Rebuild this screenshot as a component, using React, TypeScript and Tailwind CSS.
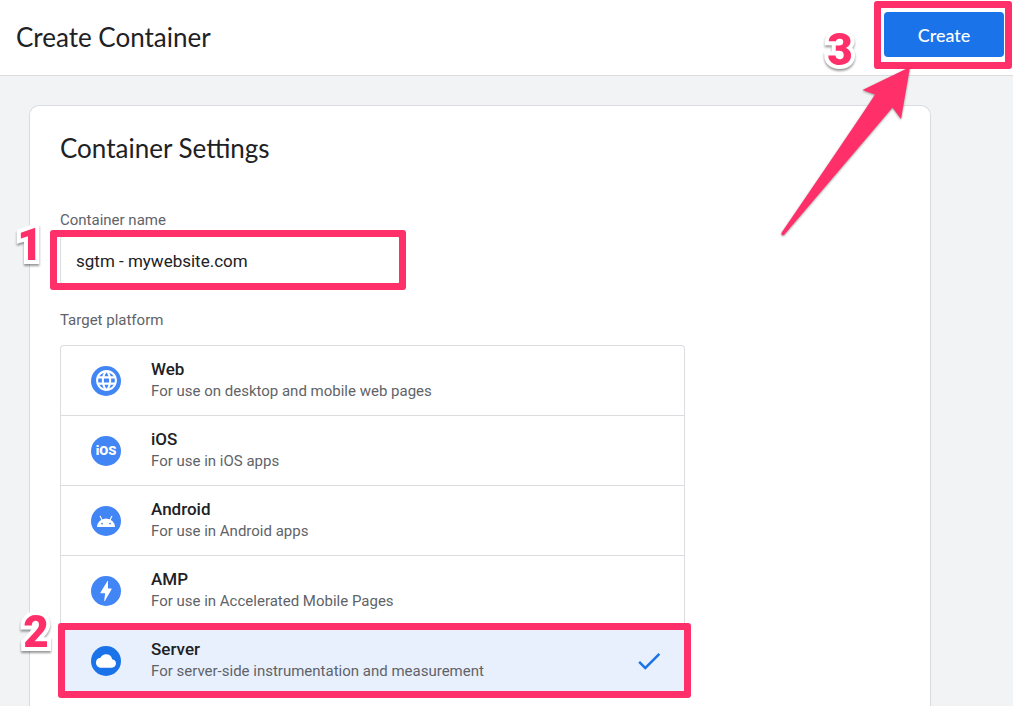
import React, { useState } from 'react';
import clsx from 'clsx';
import { MdCheck, MdCloud, MdLanguage } from 'react-icons/md';

interface Platform {
    id: string;
    name: string;
    description: string;
    icon: React.ReactNode;
}

const AndroidIcon: React.FC = () => (
    <svg viewBox="0 0 20 12" className="w-5 h-3" aria-hidden="true">
        <path d="M1 12a9 8.6 0 0 1 18 0z" fill="white" />
        <path d="M6 5 4.2 1.2M14 5l1.8-3.8" stroke="white" strokeWidth="1.1" strokeLinecap="round" />
        <circle cx="6" cy="8.6" r="0.9" fill="#4285f4" />
        <circle cx="14" cy="8.6" r="0.9" fill="#4285f4" />
    </svg>
);

const BoltIcon: React.FC = () => (
    <svg viewBox="0 0 12 22" className="w-3 h-[22px]" aria-hidden="true">
        <path d="M7.6.8 8 1v7.6h3.2c.4 0 .6.4.4.7L4.7 21.2l-.5-.2.9-7.8H1c-.5 0-.7-.4-.5-.8z" fill="white" />
    </svg>
);

const PLATFORMS: Platform[] = [
    {
        id: 'web',
        name: 'Web',
        description: 'For use on desktop and mobile web pages',
        icon: <MdLanguage size={25} />,
    },
    {
        id: 'ios',
        name: 'iOS',
        description: 'For use in iOS apps',
        icon: <span className="text-[13px] leading-[30px] font-black">iOS</span>,
    },
    {
        id: 'android',
        name: 'Android',
        description: 'For use in Android apps',
        icon: <AndroidIcon />,
    },
    {
        id: 'amp',
        name: 'AMP',
        description: 'For use in Accelerated Mobile Pages',
        icon: <BoltIcon />,
    },
    {
        id: 'server',
        name: 'Server',
        description: 'For server-side instrumentation and measurement',
        icon: <MdCloud size={20} />,
    },
];

const Highlight: React.FC<{ className: string }> = ({ className }) => (
    <div className={clsx('absolute border-[7px] border-[#ff3069] rounded-[3px] pointer-events-none', className)} />
);

const Step: React.FC<{ value: number; className: string }> = ({ value, className }) => (
    <span
        className={clsx(
            'absolute w-[26px] text-center font-black text-[44px] leading-[44px] text-[#ff3069] pointer-events-none',
            '[-webkit-text-stroke:8px_white] [paint-order:stroke_fill] [stroke-linejoin:round] drop-shadow-[0_2px_1px_rgba(0,0,0,0.4)]',
            className
        )}
    >
        {value}
    </span>
);

const Arrow: React.FC = () => (
    <svg
        viewBox="0 0 132 172"
        className="absolute right-[92px] top-[54px] z-10 w-[132px] h-[172px] pointer-events-none drop-shadow-[0_1px_1px_rgba(0,0,0,0.4)]"
        aria-hidden="true"
    >
        <path d="M130 1 82.500 24 95 28.500Q90 37 2 166Q0 170 4 169Q80 80 112.500 41.500L121 53z" fill="#ff3069" />
    </svg>
);

const App: React.FC = () => {
    const [name, setName] = useState('sgtm - mywebsite.com');
    const [platform, setPlatform] = useState('server');

    return (
        <div className="min-h-screen flex flex-col bg-[#f1f3f4] font-['Roboto',sans-serif] text-[#202124]">
            <header className="flex items-start justify-between h-[76px] pt-3 pl-4 pr-[9px] bg-white border-b border-[#dadce0]">
                <h1 className="font-['Lato',sans-serif] text-[26px] leading-[50px]">Create Container</h1>
                <div className="relative">
                    <button
                        type="button"
                        className="block w-[120px] h-[45px] rounded bg-[#1a73e8] font-['Lato',sans-serif] text-lg font-medium text-white"
                    >
                        Create
                    </button>
                    <Highlight className="-left-[10px] -right-2 -top-[11px] -bottom-3" />
                    <Step value={3} className="right-[151px] top-4" />
                    <Arrow />
                </div>
            </header>

            <main className="flex-1 flex px-[29px] pt-[29px]">
                <section className="w-full max-w-[902px] px-[30px] pt-6 pb-2 bg-white border border-b-0 border-[#dadce0] rounded-t-[10px]">
                    <h2 className="font-['Lato',sans-serif] text-[26px] leading-9">Container Settings</h2>

                    <label htmlFor="container-name" className="block mt-11 text-[15px] leading-5 text-[#5f6368]">
                        Container name
                    </label>
                    <div className="relative mt-[5px] w-[340px]">
                        <input
                            id="container-name"
                            type="text"
                            value={name}
                            onChange={(e) => setName(e.target.value)}
                            className="block w-full h-[50px] px-[15px] pt-0.5 border border-[#dadce0] rounded text-[17px] outline-none"
                        />
                        <Highlight className="-left-[10px] -right-[6px] -inset-y-[5px]" />
                        <Step value={1} className="right-[357px] -top-3" />
                    </div>

                    <fieldset className="mt-[25px]">
                        <legend className="text-[15px] leading-5 text-[#5f6368]">Target platform</legend>
                        <div className="mt-[15px] w-full max-w-[625px] border border-b-0 border-[#dadce0] rounded">
                            {PLATFORMS.map((item) => {
                                const selected = item.id === platform;
                                return (
                                    <label
                                        key={item.id}
                                        className={clsx(
                                            'relative flex items-center h-[70px] px-[30px] border-b border-[#dadce0] cursor-pointer',
                                            selected && 'bg-[#e8f0fe]'
                                        )}
                                    >
                                        <input
                                            type="radio"
                                            name="platform"
                                            value={item.id}
                                            checked={selected}
                                            onChange={() => setPlatform(item.id)}
                                            className="sr-only"
                                        />
                                        <span
                                            className={clsx(
                                                'flex items-center justify-center w-[30px] h-[30px] mr-[30px] rounded-full text-white',
                                                selected ? 'bg-[#1a73e8]' : 'bg-[#4285f4]'
                                            )}
                                        >
                                            {item.icon}
                                        </span>
                                        <span className="flex-1 pb-px">
                                            <span className="block text-[17px] leading-[22px] font-medium">{item.name}</span>
                                            <span className="block text-[15px] leading-[22px] text-[#5f6368]">{item.description}</span>
                                        </span>
                                        {selected && (
                                            <>
                                                <MdCheck size={30} className="-mr-[10px] text-[#1a73e8]" />
                                                <Highlight className="-left-[3px] -right-[7px] -top-[3px] -bottom-[3px]" />
                                                <Step value={2} className="-left-[38px] -top-4" />
                                            </>
                                        )}
                                    </label>
                                );
                            })}
                        </div>
                    </fieldset>
                </section>
            </main>
        </div>
    );
};

export default App;
